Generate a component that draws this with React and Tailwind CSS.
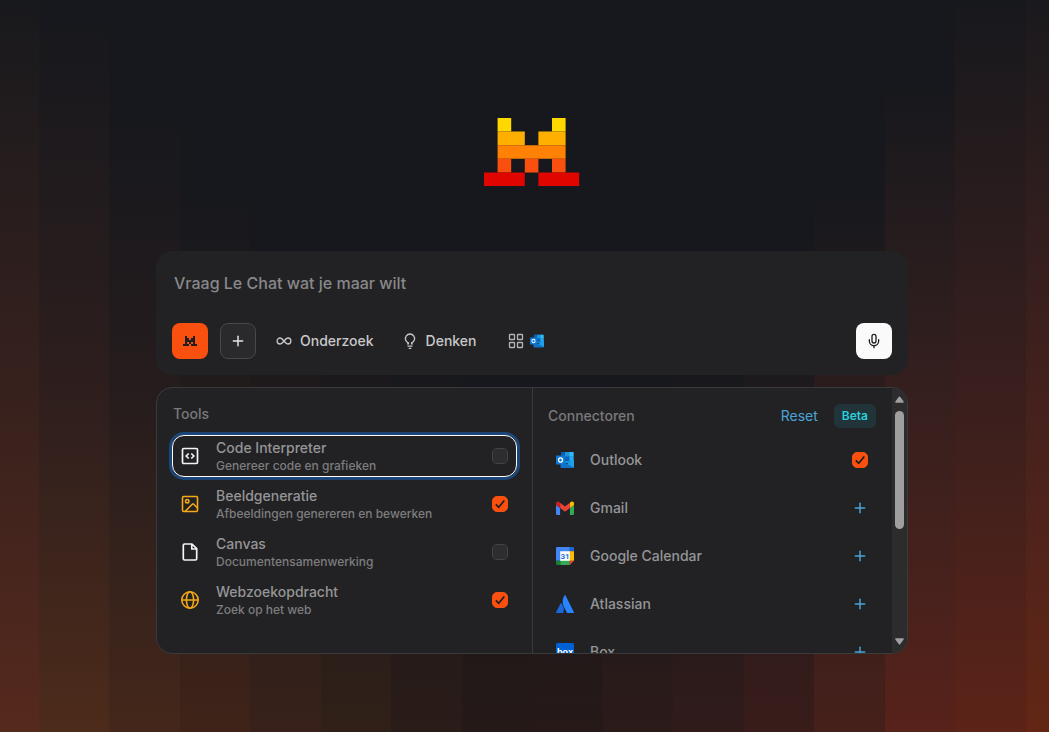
import React, { useState } from "react";
import { Mic, Plus } from "lucide-react";

const columns = [
  "from-[#18191d] from-0% via-[#38211d] via-55% to-[#56291d]",
  "from-[#17181d] from-3% via-[#2d1e1d] via-52% to-[#4d2b1a]",
  "from-[#17181d] from-16% via-[#251c1d] via-52% to-[#44271a]",
  "from-[#17181d] from-27% via-[#211b1c] via-52% to-[#3f2318]",
  "from-[#17181d] from-34% via-[#1e1a1c] via-52% to-[#38211a]",
  "from-[#17181d] from-40% via-[#1b191c] via-52% to-[#302018]",
  "from-[#17181d] from-50% to-[#2a1c18]",
  "from-[#17181d] from-55% to-[#241917]",
  "from-[#17181d] from-55% to-[#261918]",
  "from-[#17181d] from-52% to-[#2b1b19]",
  "from-[#17181d] from-50% to-[#301b1a]",
  "from-[#17181d] from-40% via-[#1d1a1d] via-52% to-[#381c1a]",
  "from-[#17181d] from-27% via-[#2a1c1d] via-52% to-[#46201a]",
  "from-[#17181d] from-12% via-[#341f1e] via-52% to-[#57221a]",
  "from-[#17181d] from-0% via-[#3a1f1d] via-55% to-[#5c2317]",
  "from-[#1a191d] from-0% via-[#44211d] via-55% to-[#632614]",
];

const Logo = () => (
  <svg width="96" height="68" viewBox="0 0 70 50" preserveAspectRatio="xMinYMin" aria-label="Le Chat" role="img">
    <path fill="#ffd800" d="M10 0h10v10H10zM50 0h10v10H50z" />
    <path fill="#ffaf00" d="M10 10h20v10H10zM40 10h20v10H40z" />
    <path fill="#ff8205" d="M10 20h50v10H10z" />
    <path fill="#fa500f" d="M10 30h10v10H10zM30 30h10v10H30zM50 30h10v10H50z" />
    <path fill="#e10500" d="M0 40h30v10H0zM40 40h30v10H40z" />
  </svg>
);

const SmallLogo = () => (
  <svg width="14" height="10" viewBox="0 0 70 50" fill="#1e1e20" aria-hidden="true">
    <path d="M10 0h10v10h10v10h10V10h10V0h10v40h10v10H40V40h10V30H40v10H30V30H20v10h10v10H0V40h10z" />
  </svg>
);

const InfinityIcon = () => (
  <svg width="16" height="16" viewBox="0 0 16 16" fill="none" stroke="#c8c8ca" strokeWidth="1.3" aria-hidden="true">
    <path d="M8 8C6.600 6.200 5.600 5 4.100 5a3 3 0 0 0 0 6C5.600 11 6.600 9.800 8 8s2.400-3 3.900-3a3 3 0 0 1 0 6C10.400 11 9.400 9.800 8 8Z" />
  </svg>
);

const BulbIcon = () => (
  <svg width="16" height="16" viewBox="0 0 16 16" fill="none" stroke="#c8c8ca" strokeWidth="1.3" strokeLinecap="round" aria-hidden="true">
    <path d="M5.500 10.800h.9v-.9a4.600 4.600 0 1 1 3.200 0v.9h.9M6 13.200h4M7.200 15.300h1.600" />
  </svg>
);

const GridIcon = () => (
  <svg width="16" height="16" viewBox="0 0 16 16" fill="none" stroke="#b4b4b6" strokeWidth="1.3" aria-hidden="true">
    <rect x="1.500" y="1.500" width="5" height="5" rx=".6" />
    <rect x="9.500" y="1.500" width="5" height="5" rx=".6" />
    <rect x="1.500" y="9.500" width="5" height="5" rx=".6" />
    <rect x="9.500" y="9.500" width="5" height="5" rx=".6" />
  </svg>
);

const CodeIcon = () => (
  <svg width="18" height="18" viewBox="0 0 18 18" fill="none" stroke="#f4f4f5" strokeWidth="1.700" aria-hidden="true">
    <rect x="1.500" y="1.500" width="15" height="15" rx="1.200" />
    <path d="M7.700 6.500 5.200 9l2.500 2.500M10.300 6.500 12.800 9l-2.500 2.500" />
  </svg>
);

const ImageIcon = () => (
  <svg width="18" height="18" viewBox="0 0 18 18" fill="none" stroke="#f5a914" strokeWidth="1.600" aria-hidden="true">
    <rect x="1.500" y="1.500" width="15" height="15" rx="1.200" />
    <circle cx="6.200" cy="6.200" r="1.700" />
    <path d="m4 16.500 7.300-7.200a1 1 0 0 1 1.400 0l3.800 3.700" />
  </svg>
);

const FileIcon = () => (
  <svg width="18" height="18" viewBox="0 0 18 18" fill="none" stroke="#f4f4f5" strokeWidth="1.700" strokeLinejoin="round" aria-hidden="true">
    <path d="M11 1H3.600a1.300 1.300 0 0 0-1.300 1.300v13.400A1.300 1.300 0 0 0 3.600 17h10.800a1.300 1.300 0 0 0 1.300-1.300V5.700zM10.800 1.200V6h4.700" />
  </svg>
);

const GlobeIcon = () => (
  <svg width="18" height="18" viewBox="0 0 18 18" fill="none" stroke="#f5a914" strokeWidth="1.600" aria-hidden="true">
    <circle cx="9" cy="9" r="8.200" />
    <ellipse cx="9" cy="9" rx="3.600" ry="8.200" />
    <path d="M.8 9h16.400" />
  </svg>
);

const OutlookIcon = ({ size = 18 }) => (
  <svg width={size} height={size} viewBox="0 0 18 18" aria-hidden="true">
    <rect x="5" y="1" width="12.500" height="11" rx=".8" fill="#1490df" />
    <path fill="#0a5fb0" d="M5 1.800A.8.800 0 0 1 5.800 1H9v4.500H5z" />
    <path fill="#1c93dd" d="M9 1h4.500v4.500H9z" />
    <path fill="#35b8f1" d="M13.500 1h3.200a.8.800 0 0 1 .8.800v3.700h-4z" />
    <path fill="#0364b8" d="M9 5.500h4.500V10H9z" />
    <path fill="#28a8ea" d="M13.500 5.500h4V10h-4z" />
    <path fill="#1da1e8" d="M18 8.800v7.400a.8.800 0 0 1-.8.800H5.400l-.6-.6z" />
    <path fill="#1173c7" d="M4.500 9.500 18 16.600a.8.800 0 0 1-.8.400H5.300a.8.800 0 0 1-.8-.8z" />
    <rect y="4.500" width="9" height="9" rx=".8" fill="#0f78d4" />
    <ellipse cx="4.500" cy="9" rx="2" ry="2.200" fill="none" stroke="#fff" strokeWidth="1.300" />
  </svg>
);

const GmailIcon = () => (
  <svg width="18" height="18" viewBox="0 0 18 18" aria-hidden="true">
    <path fill="#4285f4" d="M1.200 16h2.900V9L0 5.900v8.900A1.200 1.200 0 0 0 1.200 16" />
    <path fill="#34a853" d="M13.900 16h2.900a1.200 1.200 0 0 0 1.200-1.200V5.900L13.900 9" />
    <path fill="#fbbc04" d="M13.900 3.700V9L18 5.900V4.300c0-1.500-1.700-2.400-2.900-1.500" />
    <path fill="#ea4335" d="M4.100 9V3.700L9 7.400l4.900-3.700V9L9 12.700" />
    <path fill="#c5221f" d="M0 4.300v1.600L4.100 9V3.700l-1.200-.9C1.700 1.900 0 2.800 0 4.300" />
  </svg>
);

const CalendarIcon = () => (
  <svg width="18" height="18" viewBox="0 0 18 18" aria-hidden="true">
    <path fill="#fff" d="M4 4h10v10H4z" />
    <path fill="#4285f4" d="M1.300 0h12.500v4.200H4.200v9.600H0V1.300A1.300 1.300 0 0 1 1.300 0" />
    <path fill="#1967d2" d="M13.800 0h2.900A1.300 1.300 0 0 1 18 1.300v2.900h-4.200z" />
    <path fill="#fbbc04" d="M13.800 4.200H18v9.600h-4.200z" />
    <path fill="#34a853" d="M4.200 13.800h9.600V18H4.200z" />
    <path fill="#188038" d="M0 13.800h4.200V18H1.300A1.300 1.300 0 0 1 0 16.700z" />
    <path fill="#ea4335" d="M13.800 13.800H18L13.800 18z" />
    <text x="9" y="11.800" textAnchor="middle" fontSize="8" fontWeight="700" fontFamily="Roboto, sans-serif" fill="#1a73e8">31</text>
  </svg>
);

const AtlassianIcon = () => (
  <svg width="18" height="18" viewBox="0 0 18 18" aria-hidden="true">
    <path fill="#1868db" d="M5.300 8.300a.5.500 0 0 0-.8.100L.1 17.200a.5.500 0 0 0 .4.800h6.200a.5.500 0 0 0 .5-.3c1.300-2.700.5-6.900-1.900-9.400" />
    <path fill="#2684ff" d="M8.600.3c-2.500 3.900-2.300 8.300-.7 11.500l3 5.900a.5.500 0 0 0 .5.300h6.100a.5.500 0 0 0 .4-.8L9.400.3a.5.500 0 0 0-.8 0" />
  </svg>
);

const BoxIcon = () => (
  <svg width="18" height="18" viewBox="0 0 18 18" aria-hidden="true">
    <rect width="18" height="18" rx="1.500" fill="#0061d5" />
    <text x="9" y="12" textAnchor="middle" fontSize="9" fontWeight="700" fontFamily="Inter, sans-serif" fill="#fff">box</text>
  </svg>
);

const tools = [
  { id: "code", title: "Code Interpreter", note: "Genereer code en grafieken", icon: CodeIcon, checked: false, active: true },
  { id: "image", title: "Beeldgeneratie", note: "Afbeeldingen genereren en bewerken", icon: ImageIcon, checked: true },
  { id: "canvas", title: "Canvas", note: "Documentensamenwerking", icon: FileIcon, checked: false },
  { id: "web", title: "Webzoekopdracht", note: "Zoek op het web", icon: GlobeIcon, checked: true },
];

const connectors = [
  { id: "outlook", title: "Outlook", icon: OutlookIcon, connected: true },
  { id: "gmail", title: "Gmail", icon: GmailIcon },
  { id: "calendar", title: "Google Calendar", icon: CalendarIcon },
  { id: "atlassian", title: "Atlassian", icon: AtlassianIcon },
  { id: "box", title: "Box", icon: BoxIcon },
];

const Checkbox = ({ id, defaultChecked }) => (
  <span className="grid size-4 shrink-0">
    <input
      id={id}
      type="checkbox"
      defaultChecked={defaultChecked}
      className="peer col-start-1 row-start-1 size-4 appearance-none rounded-[5px] border border-[#434345] bg-[#2d2d2f] outline-none checked:border-[#fa500f] checked:bg-[#fa500f]"
    />
    <svg
      viewBox="0 0 16 16"
      fill="none"
      stroke="#1e1e20"
      strokeWidth="1.700"
      className="pointer-events-none invisible col-start-1 row-start-1 size-4 peer-checked:visible"
      aria-hidden="true"
    >
      <path d="m3.800 8.400 2.900 2.900 5.600-6.800" />
    </svg>
  </span>
);

const ToolRow = ({ tool }) => {
  const Icon = tool.icon;
  return (
    <label
      htmlFor={tool.id}
      className={
        tool.active
          ? "flex h-[42px] items-center rounded-xl border border-white px-2 ring-3 ring-[#1c4678]"
          : "flex h-[42px] items-center rounded-xl border border-transparent px-2"
      }
    >
      <Icon />
      <span className="ml-[17px] flex flex-1 flex-col">
        <span className="text-sm leading-5 font-medium text-[#959597]">{tool.title}</span>
        <span className="text-xs leading-4 font-medium text-[#7d7d7f]">{tool.note}</span>
      </span>
      <Checkbox id={tool.id} defaultChecked={tool.checked} />
    </label>
  );
};

const ConnectorRow = ({ connector }) => {
  const Icon = connector.icon;
  return (
    <li className="flex h-12 items-center px-2">
      <Icon />
      <label htmlFor={connector.id} className="ml-4 flex-1 text-sm font-medium text-[#959597]">
        {connector.title}
      </label>
      {connector.connected ? (
        <Checkbox id={connector.id} defaultChecked />
      ) : (
        <button id={connector.id} aria-label={connector.title} className="text-[#4ba3d8]">
          <Plus size={16} strokeWidth={2.2} />
        </button>
      )}
    </li>
  );
};

const Composer = () => {
  const [value, setValue] = useState("");
  return (
    <form className="w-full rounded-2xl bg-[#222224] p-4" onSubmit={(e) => e.preventDefault()}>
      <input
        type="text"
        value={value}
        onChange={(e) => setValue(e.target.value)}
        aria-label="Vraag Le Chat wat je maar wilt"
        placeholder="Vraag Le Chat wat je maar wilt"
        className="mb-6 block h-8 w-full bg-transparent px-0.5 text-base font-medium text-gray-100 outline-none placeholder:text-[#88888a]"
      />
      <div className="flex items-center">
        <button type="button" aria-label="Le Chat" className="flex size-9 items-center justify-center rounded-lg bg-[#fa500f]">
          <SmallLogo />
        </button>
        <button type="button" aria-label="Toevoegen" className="ml-3 flex size-9 items-center justify-center rounded-lg border border-[#48484a] bg-[#2a2a2c] text-[#e4e4e6]">
          <Plus size={16} strokeWidth={2.2} />
        </button>
        <button type="button" className="ml-5 flex items-center gap-2 text-sm font-medium text-[#c8c8ca]">
          <InfinityIcon />
          Onderzoek
        </button>
        <button type="button" className="ml-7 flex items-center gap-2 text-sm font-medium text-[#c8c8ca]">
          <BulbIcon />
          Denken
        </button>
        <button type="button" aria-label="Tools" className="ml-8 flex items-center gap-1.5">
          <GridIcon />
          <OutlookIcon size={14} />
        </button>
        <button type="button" aria-label="Spraak" className="ml-auto flex size-9 items-center justify-center rounded-lg bg-[#fafafa] text-[#1e1e20]">
          <Mic size={16} strokeWidth={2} />
        </button>
      </div>
    </form>
  );
};

const ScrollBar = () => (
  <div className="flex w-[15px] shrink-0 flex-col items-center bg-[#2c2c2c] py-2" aria-hidden="true">
    <svg width="9" height="7" viewBox="0 0 10 7" fill="#9f9f9f">
      <path d="M4.300.5a.9.900 0 0 1 1.400 0l3.900 5.300c.4.500 0 1.200-.7 1.200H1.100C.4 7 0 6.300.4 5.800z" />
    </svg>
    <div className="mt-2 h-[118px] w-[9px] rounded-full bg-[#9f9f9f]" />
    <svg className="mt-auto" width="9" height="7" viewBox="0 0 10 7" fill="#9f9f9f">
      <path d="M4.300 6.500a.9.900 0 0 0 1.400 0l3.900-5.300C10 .7 9.600 0 8.900 0H1.100C.4 0 0 .7.4 1.200z" />
    </svg>
  </div>
);

const App = () => {
  return (
    <div className="grid min-h-screen overflow-hidden bg-[#17181d] font-['Inter',sans-serif]">
      <div className="col-start-1 row-start-1 -mr-[47px] -ml-8 flex" aria-hidden="true">
        {columns.map((column, index) => (
          <div key={index} className={`flex-1 bg-linear-to-b ${column}`} />
        ))}
      </div>

      <main className="col-start-1 row-start-1 flex flex-col items-center pt-[118px] pb-16 pl-[15px]">
        <Logo />
        <div className="mt-[65px] flex w-full max-w-[752px] flex-col gap-3">
          <Composer />

          <div className="grid h-[267px] grid-cols-2 grid-rows-1 overflow-hidden rounded-2xl border border-[#3a3a3c] bg-[#222224]">
            <section className="px-[15px] pt-4">
              <h2 className="mb-[11px] px-px text-sm font-medium text-[#79797b]">Tools</h2>
              <div className="flex flex-col gap-1.5">
                {tools.map((tool) => (
                  <ToolRow key={tool.id} tool={tool} />
                ))}
              </div>
            </section>

            <section className="flex min-h-0 border-l border-[#3a3a3c]">
              <div className="flex-1 overflow-hidden pt-4 pr-4 pl-[15px]">
                <div className="mb-2 flex items-center">
                  <h2 className="flex-1 text-sm font-medium text-[#79797b]">Connectoren</h2>
                  <button className="text-sm text-[#4ba3d8]">Reset</button>
                  <span className="ml-4 rounded-md bg-[#20343a] px-2 py-1 text-xs font-semibold text-[#2ccfdc]">Beta</span>
                </div>
                <ul>
                  {connectors.map((connector) => (
                    <ConnectorRow key={connector.id} connector={connector} />
                  ))}
                </ul>
              </div>
              <ScrollBar />
            </section>
          </div>
        </div>
      </main>
    </div>
  );
};

export default App;
